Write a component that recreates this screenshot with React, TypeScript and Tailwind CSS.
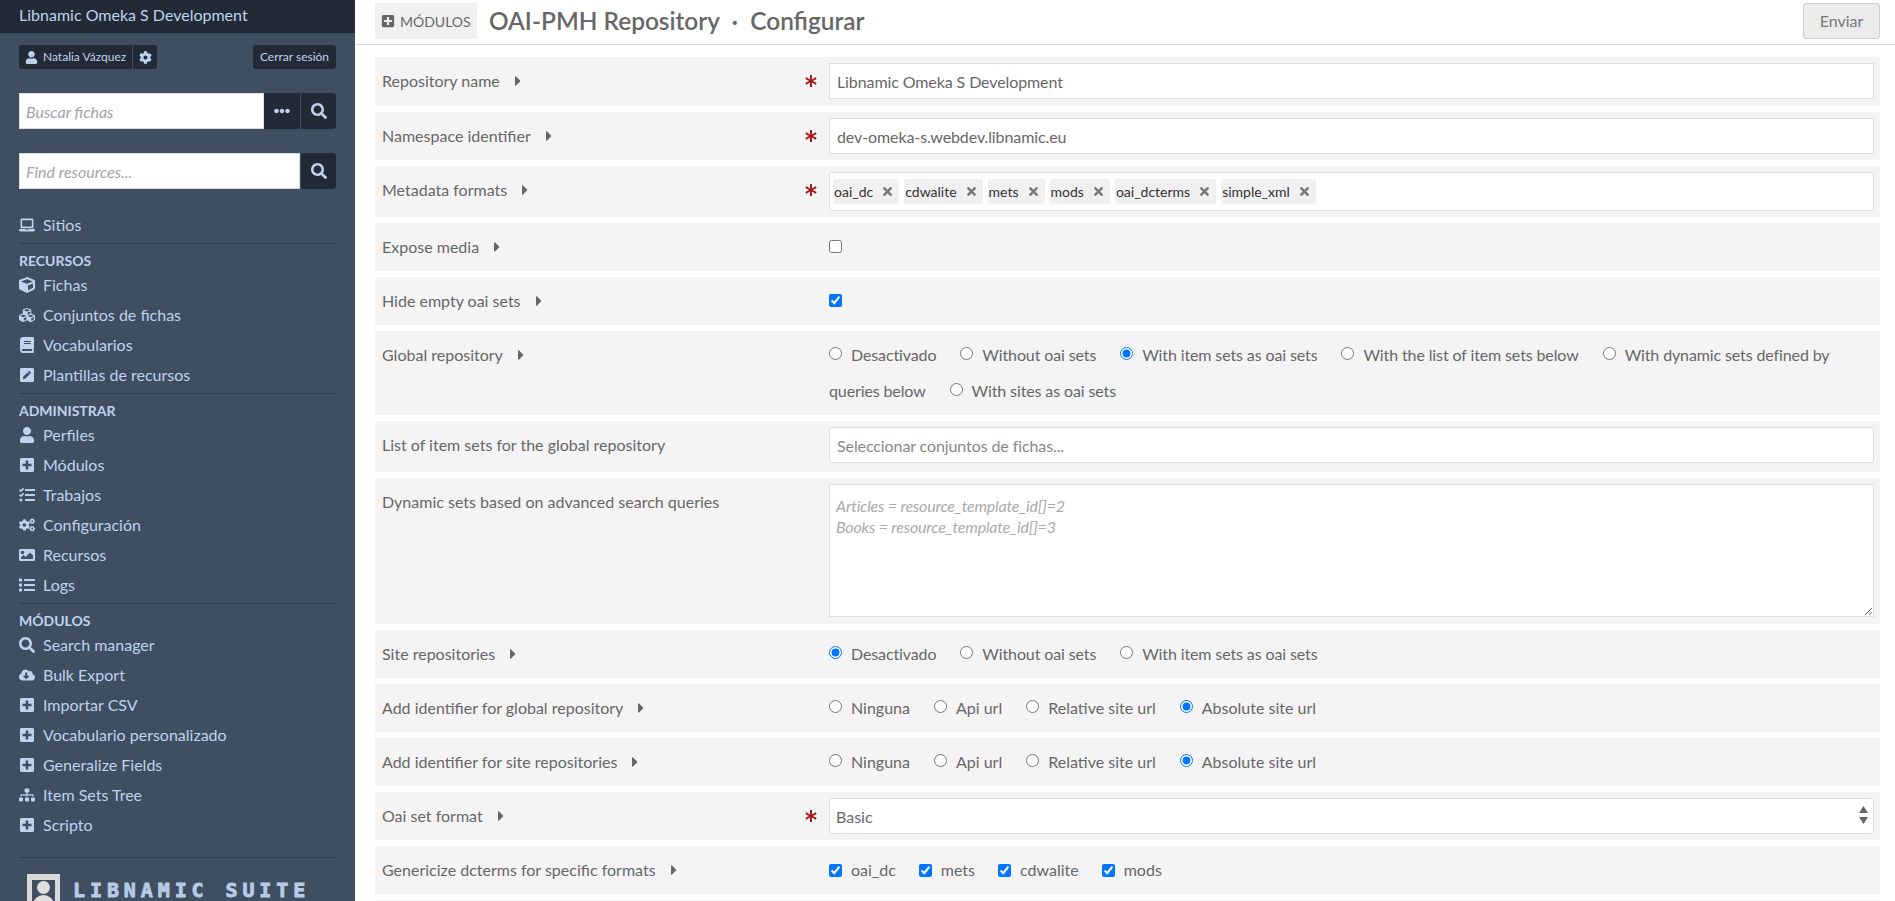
import type { ReactNode } from "react"
import {
  FaAsterisk,
  FaBook,
  FaCaretRight,
  FaCloudDownloadAlt,
  FaCog,
  FaCogs,
  FaCube,
  FaCubes,
  FaEllipsisH,
  FaImage,
  FaLaptop,
  FaList,
  FaPenSquare,
  FaPlusSquare,
  FaSearch,
  FaSitemap,
  FaTasks,
  FaTimes,
  FaUser,
} from "react-icons/fa"

const navGroups = [
  {
    title: "RECURSOS",
    items: [
      { icon: FaCube, label: "Fichas" },
      { icon: FaCubes, label: "Conjuntos de fichas" },
      { icon: FaBook, label: "Vocabularios" },
      { icon: FaPenSquare, label: "Plantillas de recursos" },
    ],
  },
  {
    title: "ADMINISTRAR",
    items: [
      { icon: FaUser, label: "Perfiles" },
      { icon: FaPlusSquare, label: "Módulos" },
      { icon: FaTasks, label: "Trabajos" },
      { icon: FaCogs, label: "Configuración" },
      { icon: FaImage, label: "Recursos" },
      { icon: FaList, label: "Logs" },
    ],
  },
  {
    title: "MÓDULOS",
    items: [
      { icon: FaSearch, label: "Search manager" },
      { icon: FaCloudDownloadAlt, label: "Bulk Export" },
      { icon: FaPlusSquare, label: "Importar CSV" },
      { icon: FaPlusSquare, label: "Vocabulario personalizado" },
      { icon: FaPlusSquare, label: "Generalize Fields" },
      { icon: FaSitemap, label: "Item Sets Tree" },
      { icon: FaPlusSquare, label: "Scripto" },
    ],
  },
]

const tags = ["oai_dc", "cdwalite", "mets", "mods", "oai_dcterms", "simple_xml"]

function NavItem({ icon: Icon, label }: { icon: typeof FaCube; label: string }) {
  return (
    <a className="flex h-[30px] items-center pb-[2px] text-[16px] text-[#bfd2ee]">
      <span className="w-[24px] shrink-0">
        <Icon className="h-4 w-auto" />
      </span>
      {label}
    </a>
  )
}

function Sidebar() {
  return (
    <aside className="h-full w-[355px] shrink-0 overflow-hidden bg-[#404e61]">
      <div className="flex h-[33px] items-center bg-[#222a35] px-[19px] pb-[3px] text-[16px] text-[#bfd2ee]">
        Libnamic Omeka S Development
      </div>

      <div className="px-[19px]">
        <div className="mt-[12px] flex h-[24px] items-stretch justify-between text-[12px] text-[#bfd2ee]">
          <div className="flex gap-px">
            <div className="flex w-[113px] items-center gap-[5px] whitespace-nowrap rounded-l-[3px] bg-[#222a35] pl-[6px]">
              <FaUser className="h-[13px] w-auto" />
              <span>Natalia Vázquez</span>
            </div>
            <div className="flex w-[24px] items-center justify-center rounded-r-[3px] bg-[#222a35]">
              <FaCog className="h-[13px] w-auto" />
            </div>
          </div>
          <div className="flex w-[83px] items-center justify-center rounded-[3px] bg-[#222a35]">
            Cerrar sesión
          </div>
        </div>

        <div className="mt-[24px] flex h-[36px]">
          <input
            readOnly
            placeholder="Buscar fichas"
            className="h-full w-[245px] border border-[#ddd] bg-white px-[6px] text-[16px] italic placeholder:text-[#a3a3a3]"
          />
          <div className="flex w-[36px] items-center justify-center bg-[#222a35] text-[#bfd2ee]">
            <FaEllipsisH className="h-4 w-auto" />
          </div>
          <div className="ml-px flex w-[35px] items-center justify-center rounded-r-[3px] bg-[#222a35] text-[#bfd2ee]">
            <FaSearch className="h-4 w-auto" />
          </div>
        </div>

        <div className="mt-[24px] flex h-[36px]">
          <input
            readOnly
            placeholder="Find resources..."
            className="h-full w-[281px] border border-[#ddd] bg-white px-[6px] text-[16px] italic placeholder:text-[#a3a3a3]"
          />
          <div className="ml-px flex w-[35px] items-center justify-center rounded-r-[3px] bg-[#222a35] text-[#bfd2ee]">
            <FaSearch className="h-4 w-auto" />
          </div>
        </div>

        <nav className="mt-[22px]">
          <NavItem icon={FaLaptop} label="Sitios" />
          {navGroups.map((group) => (
            <div key={group.title} className="mt-[2px] border-t border-[#323e4e] pt-[7px]">
              <h4 className="flex h-[20px] items-center pb-[2px] text-[14px] font-bold text-[#bfd2ee]">{group.title}</h4>
              {group.items.map((item) => (
                <NavItem key={item.label} icon={item.icon} label={item.label} />
              ))}
            </div>
          ))}
        </nav>

        <div className="mt-[16px] flex items-start gap-[13px] border-t border-[#323e4e] pl-[8px] pt-[16px]">
          <div className="relative h-[40px] w-[33px] shrink-0 overflow-hidden border-x-[5px] border-t-[6px] border-[#d9d9d9]">
            <div className="mx-auto mt-[1px] h-[13px] w-[13px] rounded-full bg-[#dedede]" />
            <div className="mx-auto mt-[1px] h-[16px] w-[21px] rounded-t-full bg-[#dedede]" />
          </div>
          <span className="mt-[5px] whitespace-nowrap font-['DejaVu_Sans_Mono',monospace] text-[20px] font-bold leading-[22px] tracking-[4.9px] text-[#b5cbe8] [-webkit-text-stroke:0.9px_#b5cbe8]">
            LIBNAMIC SUITE
          </span>
        </div>
      </div>
    </aside>
  )
}

function Field({
  label,
  hasInfo = true,
  required = false,
  className = "h-[48px]",
  children,
}: {
  label: string
  hasInfo?: boolean
  required?: boolean
  className?: string
  children: ReactNode
}) {
  return (
    <div className={`flex shrink-0 bg-[#f4f4f4] p-[6px] ${className}`}>
      <div className="flex h-[36px] w-[437px] shrink-0 items-center pl-[1px] text-[16px]">
        <span>{label}</span>
        {hasInfo && <FaCaretRight className="ml-[10px] h-[16px] w-auto" />}
        {required && <FaAsterisk className="ml-auto mr-[1px] h-[12px] w-auto text-[#a91919]" />}
      </div>
      <div className="ml-[11px] min-w-0 flex-1">{children}</div>
    </div>
  )
}

function Radios({
  name,
  options,
  checked,
  tight = false,
}: {
  name: string
  options: string[]
  checked: string
  tight?: boolean
}) {
  return (
    <div className={`text-[16px] leading-[36px] ${tight ? "tracking-[-0.12px]" : ""}`}>
      {options.map((option) => (
        <label key={option} className="mr-[24px] inline">
          <input
            type="radio"
            name={name}
            defaultChecked={option === checked}
            className="mr-[9px] ml-0 inline-block h-[13px] w-[13px] align-[1px]"
          />
          {option}
        </label>
      ))}
    </div>
  )
}

function TextInput({ value }: { value: string }) {
  return (
    <input
      readOnly
      defaultValue={value}
      className="h-[36px] w-full border border-[#ddd] bg-white px-[7px] text-[16px] tracking-[-0.1px] text-[#676767]"
    />
  )
}

function Checks({ options }: { options: string[] }) {
  return (
    <div className="flex h-[36px] items-center gap-[23px] text-[16px]">
      {options.map((option) => (
        <label key={option} className="flex items-center gap-[9px]">
          <input type="checkbox" defaultChecked className="m-0 h-[13px] w-[13px]" />
          {option}
        </label>
      ))}
    </div>
  )
}

export default function App() {
  const identifierOptions = ["Ninguna", "Api url", "Relative site url", "Absolute site url"]

  return (
    <div className="flex h-[901px] w-[1895px] overflow-hidden bg-white font-[Lato,sans-serif] text-[#676767]">
      <Sidebar />

      <main className="flex min-w-0 flex-1 flex-col">
        <header className="flex h-[45px] shrink-0 items-start border-b border-[#ddd] pt-[3px] pl-[20px] pr-[15px]">
          <div className="flex h-[36px] w-[102px] items-center gap-[5px] bg-[#f0f0f0] pl-[6px] text-[14px]">
            <FaPlusSquare className="h-[14px] w-auto" />
            MÓDULOS
          </div>
          <h1 className="ml-[12px] flex h-[36px] items-center whitespace-pre text-[24.4px] font-semibold">
            OAI-PMH Repository  ·  Configurar
          </h1>
          <button className="ml-auto h-[36px] w-[77px] rounded-[3px] border border-[#ccc] bg-[#ebebeb] text-[16px] text-[#777]">
            Enviar
          </button>
        </header>

        <form className="flex flex-col gap-[6px] pl-[20px] pr-[15px] pt-[12px]">
          <Field label="Repository name" required className="h-[49px]">
            <TextInput value="Libnamic Omeka S Development" />
          </Field>
          <Field label="Namespace identifier" required>
            <TextInput value="dev-omeka-s.webdev.libnamic.eu" />
          </Field>
          <Field label="Metadata formats" required className="h-[51px]">
            <div className="flex h-[39px] items-center gap-[5px] rounded-[3px] border border-[#ddd] bg-white pl-[3px]">
              {tags.map((tag) => (
                <span
                  key={tag}
                  className="flex h-[25px] items-center gap-[8px] rounded-[3px] bg-[#f0f0f0] pl-px pr-[5px] text-[14px] text-[#333]"
                >
                  {tag}
                  <FaTimes className="h-[13px] w-auto text-[#777]" />
                </span>
              ))}
            </div>
          </Field>
          <Field label="Expose media">
            <div className="flex h-[36px] items-center pb-px">
              <input type="checkbox" className="m-0 h-[13px] w-[13px]" />
            </div>
          </Field>
          <Field label="Hide empty oai sets">
            <div className="flex h-[36px] items-center pb-px">
              <input type="checkbox" defaultChecked className="m-0 h-[13px] w-[13px]" />
            </div>
          </Field>
          <Field label="Global repository" className="h-[84px]">
            <Radios
              name="global"
              tight
              checked="With item sets as oai sets"
              options={[
                "Desactivado",
                "Without oai sets",
                "With item sets as oai sets",
                "With the list of item sets below",
                "With dynamic sets defined by queries below",
                "With sites as oai sets",
              ]}
            />
          </Field>
          <Field label="List of item sets for the global repository" hasInfo={false} className="h-[51px]">
            <input
              readOnly
              placeholder="Seleccionar conjuntos de fichas..."
              className="h-[36px] w-full rounded-[3px] border border-[#ddd] bg-white px-[7px] text-[16px] tracking-[-0.1px] placeholder:text-[#888]"
            />
          </Field>
          <Field label="Dynamic sets based on advanced search queries" hasInfo={false} className="h-[146px]">
            <textarea
              readOnly
              rows={6}
              placeholder={"Articles = resource_template_id[]=2\nBooks = resource_template_id[]=3"}
              className="block h-[133px] w-full border border-[#ddd] bg-white px-[6px] py-[11px] text-[16px] italic leading-[20.5px] tracking-[-0.2px] placeholder:text-[#aaa]"
            />
          </Field>
          <Field label="Site repositories">
            <Radios
              name="site"
              tight
              checked="Desactivado"
              options={["Desactivado", "Without oai sets", "With item sets as oai sets"]}
            />
          </Field>
          <Field label="Add identifier for global repository">
            <Radios name="idglobal" checked="Absolute site url" options={identifierOptions} />
          </Field>
          <Field label="Add identifier for site repositories">
            <Radios name="idsite" checked="Absolute site url" options={identifierOptions} />
          </Field>
          <Field label="Oai set format" required>
            <div className="relative">
              <select className="h-[36px] w-full appearance-none rounded-[3px] border border-[#ddd] bg-white px-[6px] pt-[2px] text-[16px] text-[#676767]">
                <option>Basic</option>
              </select>
              <svg className="absolute right-[6px] top-[8px] h-[18px] w-[9px]" viewBox="0 0 9 18">
                <path d="M4.5 0 9 7H0zM4.5 18 0 11h9z" fill="#676767" />
              </svg>
            </div>
          </Field>
          <Field label="Genericize dcterms for specific formats">
            <Checks options={["oai_dc", "mets", "cdwalite", "mods"]} />
          </Field>
          <div className="h-[48px] shrink-0 bg-[#f4f4f4]" />
        </form>
      </main>
    </div>
  )
}
